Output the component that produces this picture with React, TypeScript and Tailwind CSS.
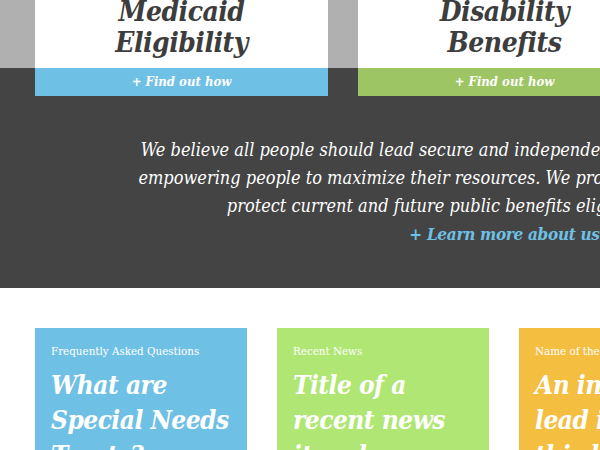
const slab = { fontFamily: '"DejaVu Serif Condensed", "DejaVu Serif", serif' };

function TopCard({ title, bar }: { title: string[]; bar: string }) {
  return (
    <div className="w-[293px] shrink-0">
      <div className="h-[68px] bg-white flex flex-col justify-end items-center pb-[10px] text-[#3d3d3d] font-bold italic text-[28px] leading-[31px] tracking-[-0.5px]">
        {title.map((t) => (
          <div key={t}>{t}</div>
        ))}
      </div>
      <div className={`${bar} h-[28px] flex items-center justify-center text-white font-bold italic text-[13px]`}>
        + Find out how
      </div>
    </div>
  );
}

function InfoCard({ label, title, bg }: { label: string; title: string[]; bg: string }) {
  return (
    <div className={`${bg} w-[212px] h-[200px] shrink-0 px-4 pt-[15px] text-white`}>
      <div className="text-[11.5px] leading-[16px]">{label}</div>
      <div className="mt-[9px] font-bold italic text-[26px] leading-[35px] tracking-[-0.5px]">
        {title.map((t) => (
          <div key={t} className="whitespace-nowrap">{t}</div>
        ))}
      </div>
    </div>
  );
}

export default function App() {
  return (
    <div className="w-[600px] h-[450px] overflow-hidden bg-white" style={slab}>
      <div className="w-[1009px]">
        <section className="bg-[linear-gradient(to_bottom,#b0b0b0_68px,#444444_68px)] pb-[40px]">
          <div className="flex gap-[30px] px-[35px]">
            <TopCard title={['Medicaid', 'Eligibility']} bar="bg-[#6ec1e4]" />
            <TopCard title={['Disability', 'Benefits']} bar="bg-[#9dc563]" />
            <TopCard title={['Special Needs', 'Trusts']} bar="bg-[#f4be41]" />
          </div>
          <div className="mt-[40px] text-center text-white italic text-[18px] leading-[28px]">
            <p className="whitespace-nowrap">We believe all people should lead secure and independent lives, and we are dedicated to</p>
            <p className="whitespace-nowrap">empowering people to maximize their resources. We provide all the legal tools needed to</p>
            <p className="whitespace-nowrap">protect current and future public benefits eligibility for your family.</p>
            <a className="font-bold text-[#6ec1e4] text-[17px] tracking-[-0.3px]">+ Learn more about us</a>
          </div>
        </section>
        <section className="flex gap-[30px] px-[35px] pt-[40px]">
          <InfoCard label="Frequently Asked Questions" title={['What are', 'Special Needs', 'Trusts?']} bg="bg-[#6fc0e5]" />
          <InfoCard label="Recent News" title={['Title of a', 'recent news', 'item here']} bg="bg-[#b0e673]" />
          <InfoCard label="Name of the Blog" title={['An intro', 'lead in', 'this blog']} bg="bg-[#f4be41]" />
          <InfoCard label="Upcoming Events" title={['Event title', 'goes here']} bg="bg-[#6fc0e5]" />
        </section>
      </div>
    </div>
  );
}
